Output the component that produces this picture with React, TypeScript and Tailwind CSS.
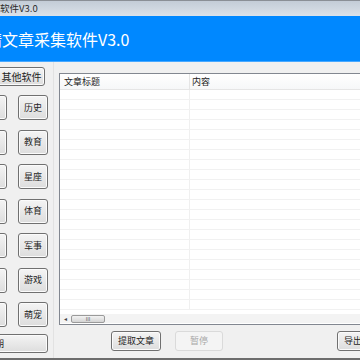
const cats = [
  ["", "历史"],
  ["", "教育"],
  ["", "星座"],
  ["", "体育"],
  ["", "军事"],
  ["", "游戏"],
  ["", "萌宠"],
];

const btn =
  "flex items-center justify-center rounded-[3px] border border-[#707070] bg-gradient-to-b from-[#f4f4f4] to-[#dddddd] text-[#1e1e1e] shadow-[inset_0_0_0_1px_#fbfbfb]";

function App() {
  const rows = Array.from({ length: 22 });
  return (
    <div
      className="flex h-[360px] w-[360px] flex-col overflow-hidden bg-[#f0f0f0]"
      style={{ fontFamily: '"Noto Sans CJK SC", "Noto Sans", sans-serif' }}
    >
      {/* window title */}
      <div className="flex h-[16px] shrink-0 items-center border-t border-[#8a8f96] bg-gradient-to-b from-[#c3ccd7] to-[#dbe2e9] whitespace-nowrap">
        <span className="text-[9.5px] text-[#2a2a2a]">软件V3.0</span>
      </div>

      {/* banner */}
      <div className="flex h-[46px] shrink-0 items-center border-b border-[#47a8ff] bg-[#0088ff] whitespace-nowrap">
        <span className="ml-[-14px] text-[16px] text-white">精文章采集软件V3.0</span>
      </div>

      <div className="flex min-h-0 flex-1 border-b-2 border-[#6d6d6d]">
        {/* left side */}
        <div className="flex w-[54px] shrink-0 flex-col border-r border-[#e2e2e2] pt-[5px]">
          <div className={`${btn} ml-[-8px] h-[19px] w-[53px] pl-[6px] text-[10px]`}>其他软件</div>
          <div className="ml-[-23px] mt-[9px] grid grid-cols-[30px_30px] gap-x-[11px] gap-y-[9.5px]">
            {cats.flat().map((c, i) => (
              <div key={i} className={`${btn} h-[25px] text-[9px]`}>
                {c}
              </div>
            ))}
          </div>
          <div className={`${btn} ml-[-30px] mt-[7px] h-[19px] w-[78px] text-[9px]`}>
            <span className="ml-auto mr-[43px]">到期</span>
          </div>
        </div>

        {/* right side */}
        <div className="ml-[5px] flex w-[330px] shrink-0 flex-col pt-[11px]">
          <div className="flex h-[252px] flex-col border border-[#828790] bg-white">
            <div className="flex h-[16px] shrink-0 border-b border-[#e5e5e5] bg-gradient-to-b from-white to-[#f6f7f8] text-[9px] text-[#222]">
              <div className="flex w-[130px] items-center border-r border-[#e5e5e5] pl-[4px]">文章标题</div>
              <div className="flex items-center pl-[2px]">内容</div>
            </div>
            <div className="relative min-h-0 flex-1 overflow-hidden">
              {rows.map((_, i) => (
                <div key={i} className="flex h-[10px] border-b border-[#f1f1f1]">
                  <div className="w-[130px] border-r border-[#f0f0f0]" />
                </div>
              ))}
            </div>
            <div className="mb-[1px] flex h-[9px] shrink-0 items-center bg-[#f3f3f3]">
              <span className="ml-[4px] text-[6px] leading-none text-[#444]">◂</span>
              <div className="ml-[4px] flex h-[8px] w-[34px] items-center justify-center rounded-[2px] border border-[#9a9a9a] bg-gradient-to-b from-[#f3f3f3] to-[#d4d4d4] text-[5px] leading-none text-[#555]">
                III
              </div>
            </div>
          </div>

          <div className="mt-[6px] flex text-[9px]">
            <div className={`${btn} ml-[52px] h-[20px] w-[50px] border-[#3c3c3c]`}>提取文章</div>
            <div className="ml-[14px] flex h-[20px] w-[48px] items-center justify-center rounded-[3px] border border-[#dadada] bg-[#f4f4f4] text-[#a8a8a8]">
              暂停
            </div>
            <div className={`${btn} ml-[114px] h-[20px] w-[50px]`}>导出文章</div>
          </div>
        </div>
      </div>
    </div>
  );
}

export default App;
